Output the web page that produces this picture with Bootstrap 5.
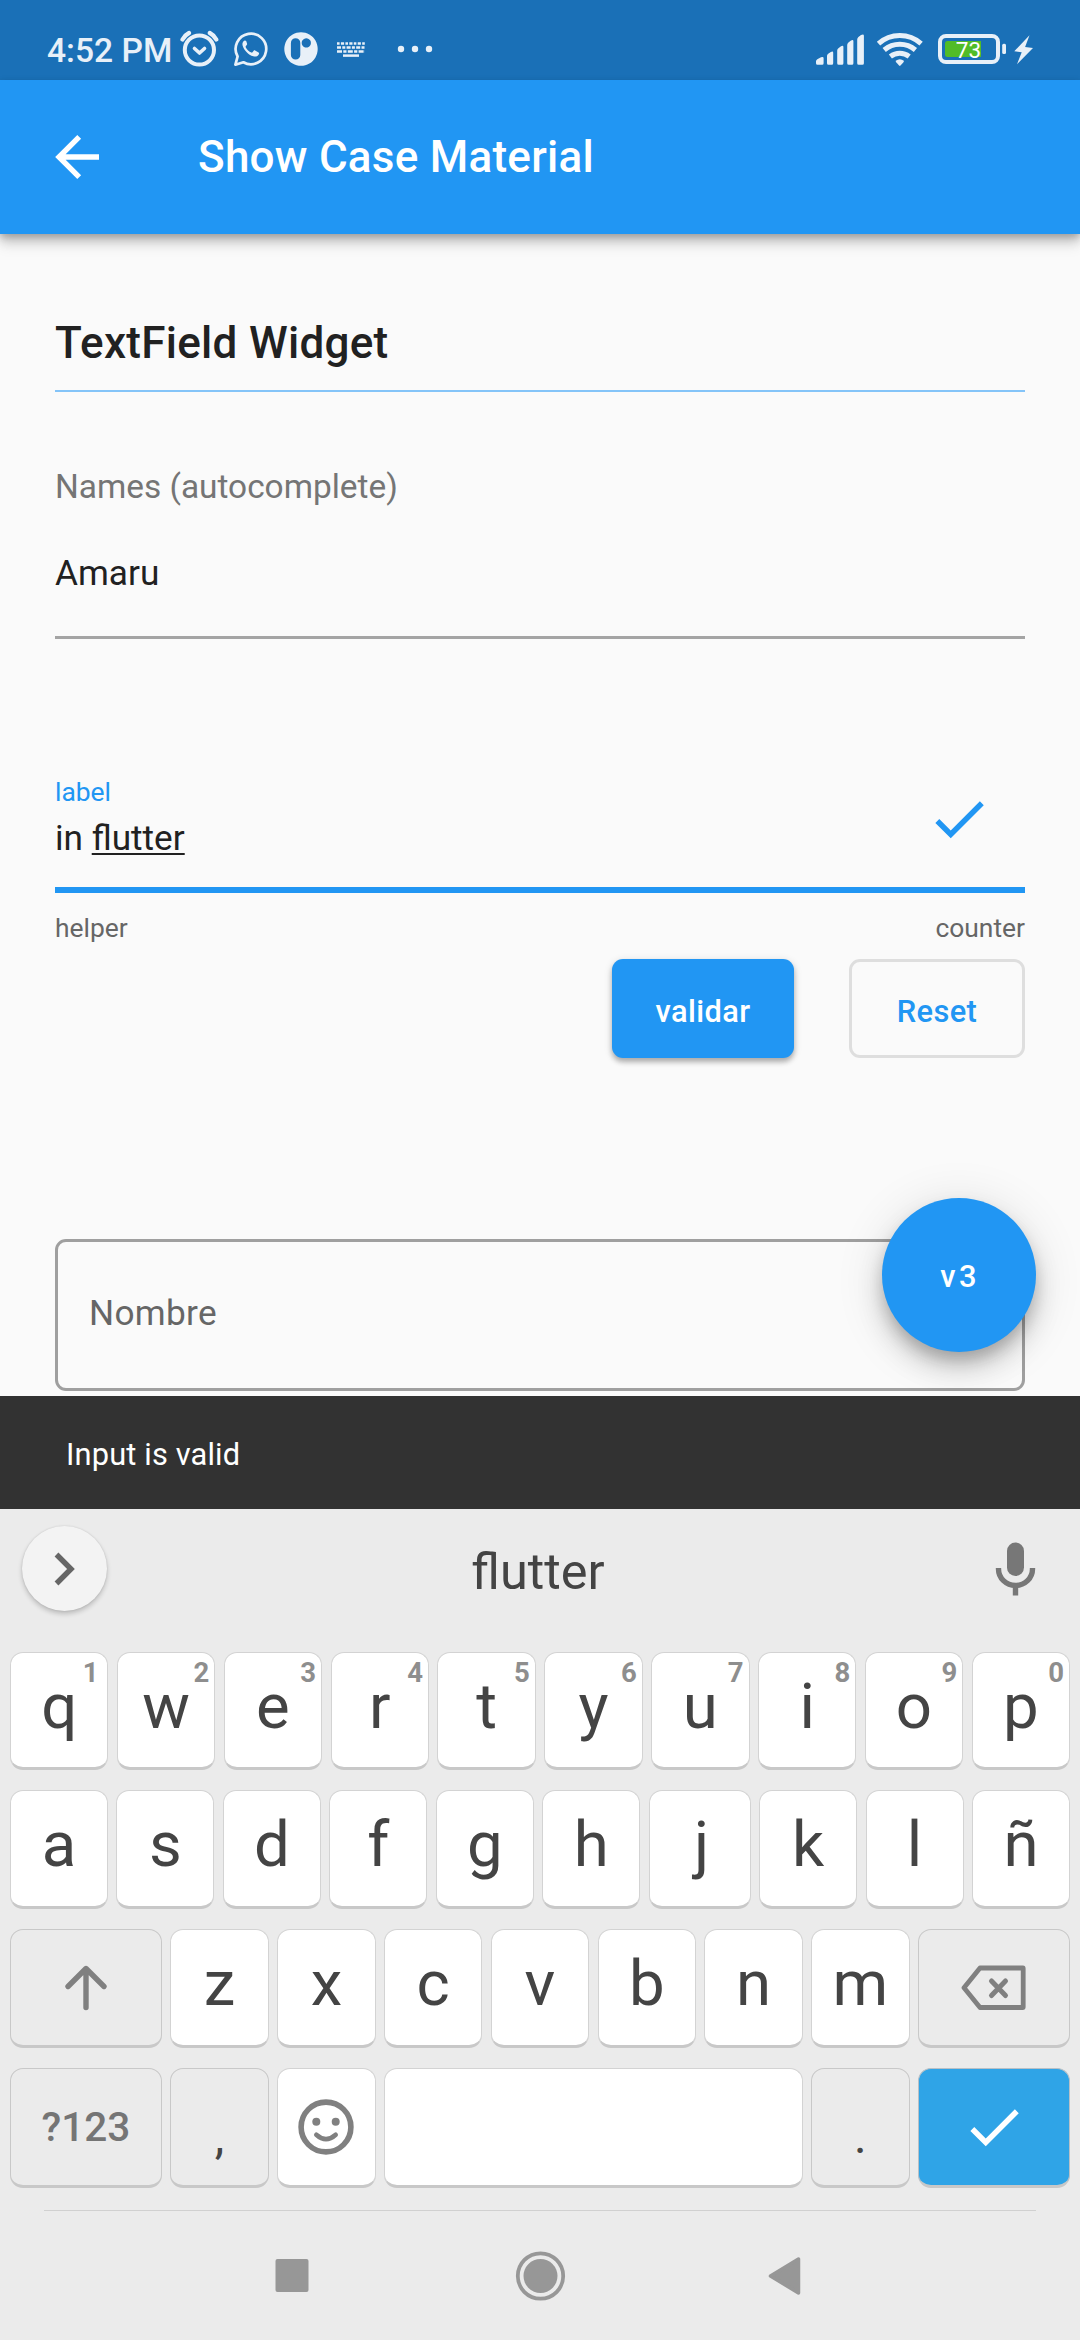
<!DOCTYPE html>
<html lang="es">
<head>
<meta charset="utf-8">
<meta name="viewport" content="width=device-width, initial-scale=1">
<title>Show Case Material</title>
<link href="https://cdn.jsdelivr.net/npm/bootstrap@5.3.0/dist/css/bootstrap.min.css" rel="stylesheet">
<style>
  :root { --md-blue: #2196f3; }
  body { font-family: Roboto, "Noto Sans", sans-serif; background: #fafafa; color: #212121; }
  svg { display: block; flex: none; }
  .screen { width: 1080px; height: 2340px; overflow: hidden; white-space: nowrap; }

  .status-bar { height: 80px; padding: 21px 46px 0 47px; background: #1a70b7; color: #e8f0f8; }
  .status-bar .clock { font-size: 33.6px; font-weight: 500; line-height: 59px; width: 133px; }
  .batt-text { font-size: 22.5px; fill: #fff; }

  .app-bar { height: 154px; padding: 0 55px; background: var(--md-blue); color: #fff; box-shadow: 0 6px 11px rgba(0,0,0,.2), 0 11px 14px rgba(0,0,0,.09), 0 3px 6px rgba(0,0,0,.14); z-index: 2; }
  .app-title { font-size: 44px; font-weight: 500; letter-spacing: .25px; margin-left: 98px; line-height: 154px; }

  .page-body { height: 1162px; padding: 62px 55px 0; }
  .section-title { height: 96px; margin: 0 0 70px; font-size: 44px; font-weight: 500; line-height: 94px; letter-spacing: .28px; border-bottom: 2px solid #84c4f8; }
  .hint-label { font-size: 33.4px; line-height: 49px; height: 49px; color: #757575; }
  .plain-input { height: 128px; font-size: 35.2px; line-height: 124px; border-bottom: 3px solid #a4a4a4; }
  .field-active { height: 117px; margin-top: 137px; border-bottom: 6px solid var(--md-blue); }
  .float-label { font-size: 26.4px; line-height: 32px; color: var(--md-blue); }
  .field-value { font-size: 35.2px; line-height: 60px; }
  .field-value u { text-decoration-thickness: 2px; text-underline-offset: 3px; text-decoration-skip-ink: none; }
  .field-check { margin: 10px 33px 0 0; }
  .field-notes { height: 66px; padding-top: 4px; font-size: 26.4px; line-height: 62px; color: #666; }
  .action-row { gap: 55px; }
  .md-btn { height: 99px; border-radius: 11px; padding: 7px 0 0; font-size: 30.8px; font-weight: 500; letter-spacing: .4px; }
  .btn-validate { width: 182px; border: 0; background: var(--md-blue); color: #fff; box-shadow: 0 4px 5px rgba(0,0,0,.24), 0 2px 8px rgba(0,0,0,.14); }
  .btn-reset { width: 176px; border: 3px solid #dedede; color: var(--md-blue); }
  .outlined-input { height: 152px; margin-top: 181px; border: 3px solid #9f9f9f; border-radius: 11px; padding: 0 0 3px 31px; font-size: 35.2px; letter-spacing: .3px; color: #666; }
  .fab { right: 44px; bottom: 44px; width: 154px; height: 154px; background: var(--md-blue); color: #fff; font-size: 30.8px; font-weight: 500; letter-spacing: 3.3px; padding: 5px 0 0 2px; box-shadow: 0 10px 15px -2px rgba(0,0,0,.2), 0 17px 28px rgba(0,0,0,.14), 0 6px 50px rgba(0,0,0,.12); }

  .snack { height: 113px; padding: 5px 66px 0; background: #323232; color: #fff; font-size: 30.8px; letter-spacing: .15px; z-index: 2; }

  .keyboard { background: #ebebeb; height: 831px; color: #444; }
  .suggest { height: 119px; padding: 0 22px; }
  .suggest-more { width: 85px; height: 85px; background: #f3f3f3; box-shadow: 0 3px 5px rgba(0,0,0,.2), 0 0 2px rgba(0,0,0,.12); }
  .suggest-word { font-size: 50.5px; line-height: 60px; padding: 6px 4px 0 0; }
  .keys { padding: 24px 10px 0; gap: 20px; }
  .key-row { gap: 8.4px; height: 119px; }
  .key-row:first-child { height: 118px; }
  .key-row:last-child { height: 120px; }
  .key { flex: 1 1 0; border: 1px solid #d3d3d3; border-bottom: 3px solid #c8c8c8; border-radius: 13px; background: #fff; font-size: 63.5px; line-height: 1; padding-bottom: 7px; }
  .key-wide { flex: 0 0 152px; }
  .key-one { flex: 0 0 98.4px; }
  .key-fn { background: #ebebeb; border-color: #c8c8c8; padding: 0; color: #808080; }
  .key-enter { background: #2fa4e7; border-color: #b8c0c6; border-bottom-color: #c8c8c8; padding: 0; }
  .key-num { top: 4px; right: 5px; font-size: 27.5px; font-weight: 700; line-height: 32px; color: #8e8e8e; }
  .key-sym { font-size: 40.5px; font-weight: 500; color: #757575; }
  .key-punct { font-size: 48px; color: #444; }
  .key-punct span { margin-top: 20px; }
  .divider { height: 1px; margin: 22px 44px 0; background: #d0d0d0; }
  .nav-keys { height: 129px; padding: 0 0 0 275px; }
</style>
</head>
<body>
<div class="screen d-flex flex-column">

  <header class="status-bar d-flex align-items-start justify-content-between">
    <div class="d-flex align-items-start">
      <span class="clock">4:52 PM</span>
      <svg width="255" height="56" viewBox="180 21 255 56" fill="#e8f0f8">
        <g fill="none" stroke="#e8f0f8">
          <circle cx="199.4" cy="50" r="14.6" stroke-width="4"/>
          <path d="M182.5 39.5q2.500-4.500 6.500-6.500M216.300 39.500q-2.500-4.500-6.500-6.500" stroke-width="4.200" stroke-linecap="round"/>
          <path d="M194.500 48.500l5 4.500 5-4.500" stroke-width="3.600" stroke-linecap="round" stroke-linejoin="round"/>
          <path d="M235.400 64.700l2.200-8.200a15.300 15.300 0 1 1 5.800 5.800z" stroke-width="2.700" stroke-linejoin="round"/>
        </g>
        <path d="M246.300 41.300c-.5-.8-1.300-.9-2-.6-1.600.8-2.200 2.800-1.700 4.700 1.300 4.600 5.600 9.300 10.700 10.900 2.400.7 5.100-.3 5.700-2.400.2-.7.100-1.200-.4-1.500l-3.500-1.900c-.6-.3-1-.2-1.400.3l-1.200 1.500c-.3.400-.7.400-1.100.2-2.400-1-4.500-2.900-5.700-5.300-.2-.4-.1-.7.100-1l1.100-1.400c.3-.4.300-.7.200-1.100z"/>
        <path fill-rule="evenodd" d="M301 32.200a16.700 16.800 0 1 1-.01 0zM295.600 38.200a4.700 4.700 0 0 0-4.700 4.700v12a4.700 4.700 0 0 0 9.400 0v-12a4.700 4.700 0 0 0-4.700-4.700zM306.300 38.300a4.600 4.600 0 1 0 .01 0z"/>
        <g fill="none" stroke="#e8f0f8" stroke-width="2.500">
          <path d="M337 43.500h28" stroke-dasharray="2.600 1.300 3.200 1.300"/>
          <path d="M337 47.400h28" stroke-dasharray="4 1.300 3 1.300"/>
          <path d="M337 51.400h28" stroke-dasharray="5 1.300 3.200 1.300"/>
          <path d="M343 55.600h16"/>
        </g>
        <circle cx="401" cy="49" r="3.200"/><circle cx="415" cy="49" r="3.200"/><circle cx="429" cy="49" r="3.200"/>
      </svg>
    </div>
    <svg width="220" height="56" viewBox="814 21 220 56" fill="#e8f0f8">
      <path d="M816 61.500q0-1.500 1.300-2.200l3.700-2q2.600-1.200 2.600 1v5q0 1.500-1.500 1.500h-4.600q-1.500 0-1.500-1.500zM827 56q0-1.300 1.200-2.200l2.600-1.800q2.400-1.300 2.400.8v10.500q0 1.500-1.500 1.500h-3.200q-1.500 0-1.500-1.500zM837.200 50.500q0-1.300 1.200-2.300l2.600-1.900q2.400-1.300 2.400.8v16.200q0 1.500-1.500 1.500h-3.200q-1.500 0-1.500-1.500zM847.200 45q0-1.500 1.200-2.500l2.600-2q2.400-1.300 2.400.8v22q0 1.500-1.500 1.500h-3.200q-1.500 0-1.500-1.500zM857.200 39.500q0-1.500 1.200-2.500l2.600-2q2.900-1.500 2.900.8v27.500q0 1.500-1.500 1.500h-3.700q-1.500 0-1.500-1.500z"/>
      <g fill="none" stroke="#e8f0f8" stroke-width="5">
        <path d="M878.500 43.700a32 32 0 0 1 42.600 0"/>
        <path d="M884.200 50a24 24 0 0 1 31.200 0"/>
        <path d="M890.400 56.500a15.500 15.500 0 0 1 18.800 0"/>
      </g>
      <path d="M895.700 60.800q4.100-3.200 8.200 0l-.2 1.200-3.200 3.600q-.7.600-1.400 0l-3.200-3.600z"/>
      <rect x="940" y="36" width="58" height="26" rx="6" fill="none" stroke="#e8f0f8" stroke-width="4"/>
      <path fill="#51bc27" d="M947.500 41H981v16h-33.500q-2.500 0-2.500-2.500v-11q0-2.500 2.500-2.500z"/>
      <text class="batt-text" x="955.800" y="57.600">73</text>
      <rect x="1002.200" y="43.800" width="3.800" height="10.200" rx="1.500"/>
      <path d="M1029.500 35.300l-15.200 15.900 7.400 1-4.700 12 16-16.200-7.900-.9z"/>
    </svg>
  </header>

  <nav class="app-bar d-flex align-items-center position-relative">
    <svg width="45" height="46" viewBox="55 134 45 46" fill="none" stroke="#fff" stroke-width="5.400"><path d="M99 157H59M79.200 136.800L59 157l20.200 20.200"/></svg>
    <span class="app-title">Show Case Material</span>
  </nav>

  <main class="page-body position-relative">
    <h1 class="section-title">TextField Widget</h1>
    <div class="hint-label">Names (autocomplete)</div>
    <div class="plain-input">Amaru</div>

    <div class="field-active d-flex justify-content-between align-items-start">
      <div>
        <div class="float-label">label</div>
        <div class="field-value">in <u>flutter</u></div>
      </div>
      <svg class="field-check" width="66" height="66" viewBox="0 0 24 24" fill="#2196f3"><path d="M9 16.170L4.830 12l-1.420 1.410L9 19 21 7l-1.410-1.410z"/></svg>
    </div>
    <div class="field-notes d-flex justify-content-between"><span>helper</span><span>counter</span></div>
    <div class="action-row d-flex justify-content-end">
      <button type="button" class="btn md-btn btn-validate">validar</button>
      <button type="button" class="btn md-btn btn-reset">Reset</button>
    </div>

    <div class="outlined-input d-flex align-items-center">Nombre</div>
    <button type="button" class="fab btn rounded-circle position-absolute border-0">v3</button>
  </main>

  <div class="snack d-flex align-items-center position-relative">Input is valid</div>

  <section class="keyboard">
    <div class="suggest d-flex align-items-center justify-content-between">
      <div class="suggest-more rounded-circle d-flex align-items-center justify-content-center">
        <svg width="24" height="36" viewBox="0 0 24 36" fill="none" stroke="#666" stroke-width="5.400"><path d="M3.500 3.500L18 18 3.500 32.500"/></svg>
      </div>
      <span class="suggest-word">flutter</span>
      <svg width="85" height="54" viewBox="973.500 1541.500 85 54" fill="#777">
        <rect x="1007.500" y="1542" width="17" height="33.500" rx="8.500"/>
        <path d="M999 1567.500v1a17 16.500 0 0 0 34 0v-1M1016 1584v11" fill="none" stroke="#777" stroke-width="5.400"/>
      </svg>
    </div>

    <div class="keys d-flex flex-column">
      <div class="key-row d-flex">
        <div class="key d-flex align-items-center justify-content-center position-relative">q<span class="key-num position-absolute pe-1">1</span></div>
        <div class="key d-flex align-items-center justify-content-center position-relative">w<span class="key-num position-absolute">2</span></div>
        <div class="key d-flex align-items-center justify-content-center position-relative">e<span class="key-num position-absolute">3</span></div>
        <div class="key d-flex align-items-center justify-content-center position-relative">r<span class="key-num position-absolute">4</span></div>
        <div class="key d-flex align-items-center justify-content-center position-relative">t<span class="key-num position-absolute">5</span></div>
        <div class="key d-flex align-items-center justify-content-center position-relative">y<span class="key-num position-absolute">6</span></div>
        <div class="key d-flex align-items-center justify-content-center position-relative">u<span class="key-num position-absolute">7</span></div>
        <div class="key d-flex align-items-center justify-content-center position-relative">i<span class="key-num position-absolute">8</span></div>
        <div class="key d-flex align-items-center justify-content-center position-relative">o<span class="key-num position-absolute">9</span></div>
        <div class="key d-flex align-items-center justify-content-center position-relative">p<span class="key-num position-absolute">0</span></div>
      </div>
      <div class="key-row d-flex">
        <div class="key d-flex align-items-center justify-content-center">a</div>
        <div class="key d-flex align-items-center justify-content-center">s</div>
        <div class="key d-flex align-items-center justify-content-center">d</div>
        <div class="key d-flex align-items-center justify-content-center">f</div>
        <div class="key d-flex align-items-center justify-content-center">g</div>
        <div class="key d-flex align-items-center justify-content-center">h</div>
        <div class="key d-flex align-items-center justify-content-center ps-1">j</div>
        <div class="key d-flex align-items-center justify-content-center">k</div>
        <div class="key d-flex align-items-center justify-content-center">l</div>
        <div class="key d-flex align-items-center justify-content-center">ñ</div>
      </div>
      <div class="key-row d-flex">
        <div class="key key-wide key-fn d-flex align-items-center justify-content-center">
          <svg width="44" height="48" viewBox="63 1964 44 48" fill="none" stroke="#808080" stroke-width="5.400" stroke-linecap="round" stroke-linejoin="round"><path d="M85 2007.500V1969M67 1986.500l18-18 18 18"/></svg>
        </div>
        <div class="key d-flex align-items-center justify-content-center">z</div>
        <div class="key d-flex align-items-center justify-content-center">x</div>
        <div class="key d-flex align-items-center justify-content-center">c</div>
        <div class="key d-flex align-items-center justify-content-center">v</div>
        <div class="key d-flex align-items-center justify-content-center">b</div>
        <div class="key d-flex align-items-center justify-content-center">n</div>
        <div class="key d-flex align-items-center justify-content-center">m</div>
        <div class="key key-wide key-fn d-flex align-items-center justify-content-center">
          <svg width="66" height="48" viewBox="960.500 1963.500 66 48" fill="none" stroke="#808080" stroke-width="4.800" stroke-linejoin="round"><path d="M979.500 1967.500h43q.2 0 .2.500v38.500q0 .5-.5.500h-42.700L963.500 1987.300z"/><path d="M991 1980.500l14 14.500M1005 1980.500l-14 14.500" stroke-width="5" stroke-linecap="round"/></svg>
        </div>
      </div>
      <div class="key-row d-flex">
        <div class="key key-wide key-fn key-sym d-flex align-items-center justify-content-center">?123</div>
        <div class="key key-one key-fn key-punct d-flex align-items-center justify-content-center"><span>,</span></div>
        <div class="key key-one d-flex align-items-center justify-content-center p-0">
          <svg width="58" height="58" viewBox="-29 -29 58 58" fill="#808080"><circle r="24.900" fill="none" stroke="#808080" stroke-width="5.600"/><circle cx="-9.700" cy="-5.200" r="4"/><circle cx="9.700" cy="-5.200" r="4"/><path d="M-9.700 7.800q9.700 8.800 19.400 0" fill="none" stroke="#808080" stroke-width="4.600" stroke-linecap="round"/></svg>
        </div>
        <div class="key"></div>
        <div class="key key-one key-fn key-punct d-flex align-items-center justify-content-center"><span>.</span></div>
        <div class="key key-wide key-enter d-flex align-items-center justify-content-center">
          <svg width="66" height="66" viewBox="0 0 24 24" fill="#fff"><path d="M9 16.170L4.830 12l-1.420 1.410L9 19 21 7l-1.410-1.410z"/></svg>
        </div>
      </div>
    </div>

    <div class="divider"></div>
    <div class="nav-keys d-flex align-items-center">
      <svg width="530" height="50" viewBox="275 2250.500 530 50" fill="#979797">
        <rect x="275.500" y="2258.500" width="33" height="33" rx="2"/>
        <circle cx="540.500" cy="2275.500" r="22.700" fill="none" stroke="#979797" stroke-width="3.800"/>
        <circle cx="540.500" cy="2275.500" r="17"/>
        <path d="M770.500 2275.500l28-17v34z" stroke="#979797" stroke-width="3.500" stroke-linejoin="round"/>
      </svg>
    </div>
  </section>
</div>
<script src="https://cdn.jsdelivr.net/npm/bootstrap@5.3.0/dist/js/bootstrap.bundle.min.js"></script>
</body>
</html>
